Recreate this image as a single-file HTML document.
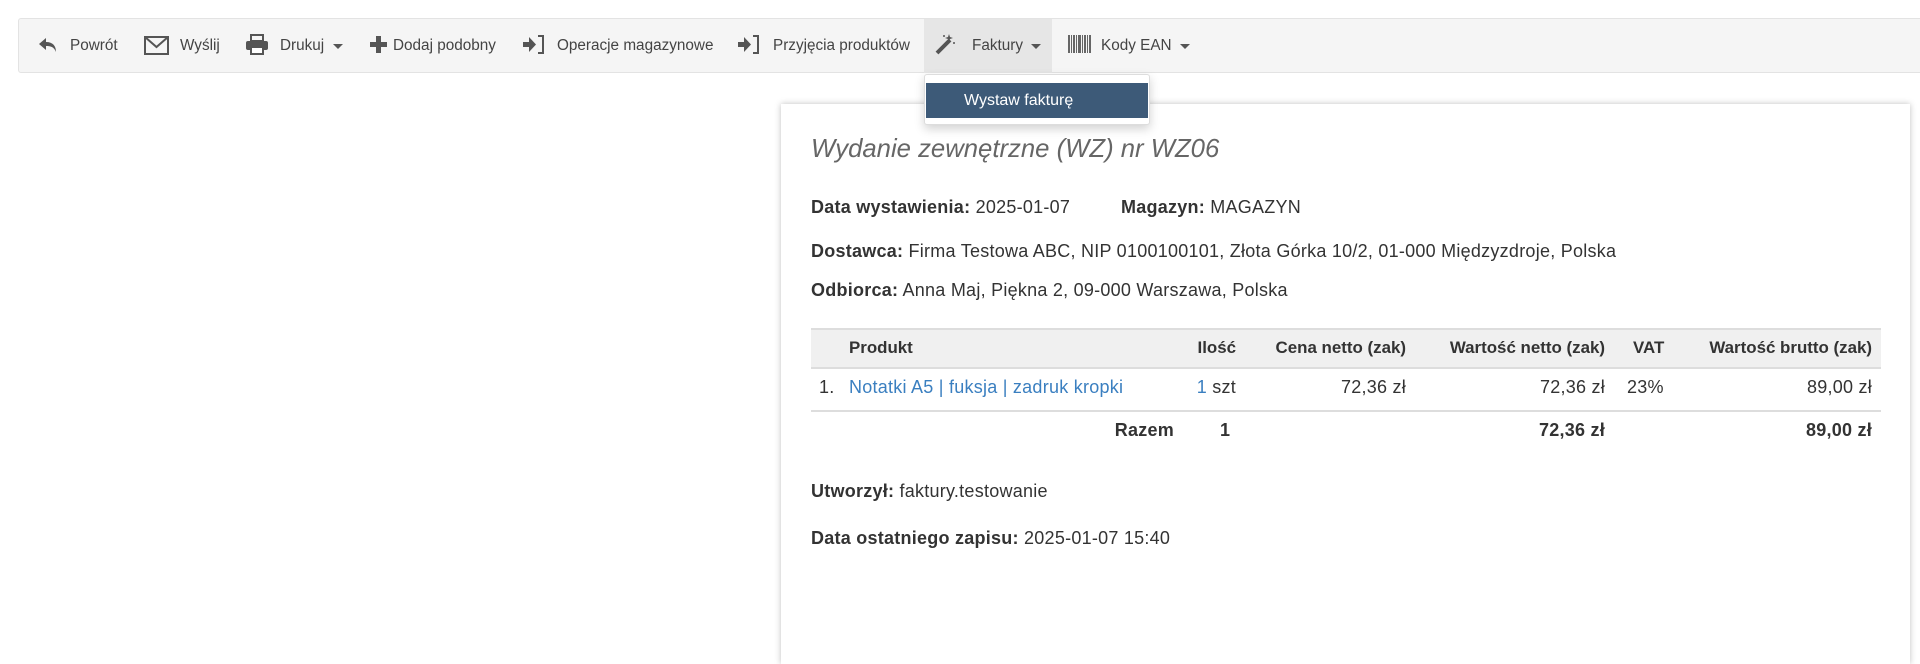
<!DOCTYPE html>
<html><head><meta charset="utf-8"><style>
*{margin:0;padding:0;box-sizing:border-box}
body{width:1920px;height:645px;background:#fff;font-family:"Liberation Sans",Arial,sans-serif;color:#333;position:relative;overflow:hidden}
.tb{position:absolute;left:18px;top:18px;width:1910px;height:55px;background:#f5f5f5;border:1px solid #e3e3e3;border-radius:3px}
.a{position:absolute;font-size:15.3px;color:#444;top:37px;white-space:nowrap}
.ic{position:absolute;top:34px}
.act{position:absolute;left:924px;top:19px;width:128px;height:54px;background:#e6e6e6}
.car{position:absolute;top:44px;width:0;height:0;border-left:5px solid transparent;border-right:5px solid transparent;border-top:5px solid #555}
.dd{position:absolute;left:924px;top:74px;width:226px;height:51px;background:#fff;border:1px solid #ddd;border-radius:3px;box-shadow:0 4px 10px rgba(0,0,0,.18);z-index:5}
.dd div{position:absolute;left:1px;top:8px;width:222px;height:35px;background:#3d5a78;color:#fff;font-size:16px;line-height:35px;padding-left:38px}
.pn{position:absolute;left:781px;top:104px;width:1129px;height:560px;background:#fff;box-shadow:0 0 6px rgba(0,0,0,.25)}
.t{position:absolute;white-space:nowrap;font-size:18px;letter-spacing:0.25px;color:#333}
.h{font-size:16.9px;letter-spacing:0}
b{font-weight:bold}
.ln{position:absolute;left:811px;width:1070px;height:2px;background:#ddd}
.r{text-align:right}
.lk{color:#3a7fc0}
</style></head><body>
<div class="tb"></div>
<div class="act"></div>
<svg class="ic" style="left:38px;top:36px" width="20" height="18" viewBox="0 0 20 18"><path d="M8 2 L1 8 L8 14 V10 C13 10 16 11 18 16 C18 10 15 6 8 6 Z" fill="#555"/></svg>
<div class="a" style="left:70px">Powrót</div>
<svg class="ic" style="left:144px;top:36px" width="25" height="19" viewBox="0 0 25 19"><rect x="1" y="1" width="23" height="17" fill="none" stroke="#555" stroke-width="2"/><path d="M1 1 L12.5 11 L24 1" fill="none" stroke="#555" stroke-width="2"/></svg>
<div class="a" style="left:180px">Wyślij</div>
<svg class="ic" style="left:246px" width="22" height="21" viewBox="0 0 22 21"><rect x="5" y="1" width="12" height="6" fill="none" stroke="#555" stroke-width="2"/><rect x="0" y="7" width="22" height="9" rx="2" fill="#555"/><rect x="5" y="13" width="12" height="7" fill="#fff" stroke="#555" stroke-width="2"/></svg>
<div class="a" style="left:280px">Drukuj</div><div class="car" style="left:333px"></div>
<svg class="ic" style="left:370px;top:36px" width="17" height="17" viewBox="0 0 17 17"><path d="M6 0h5v6h6v5h-6v6H6v-6H0V6h6z" fill="#555"/></svg>
<div class="a" style="left:393px">Dodaj podobny</div>
<svg class="ic" style="left:523px;top:35px" width="22" height="19" viewBox="0 0 22 19"><path d="M0 7h6V2l7 7.5-7 7.5v-5H0z" fill="#555"/><path d="M15 1h5v17h-5" fill="none" stroke="#555" stroke-width="2"/></svg>
<div class="a" style="left:557px">Operacje magazynowe</div>
<svg class="ic" style="left:738px;top:35px" width="22" height="19" viewBox="0 0 22 19"><path d="M0 7h6V2l7 7.5-7 7.5v-5H0z" fill="#555"/><path d="M15 1h5v17h-5" fill="none" stroke="#555" stroke-width="2"/></svg>
<div class="a" style="left:773px">Przyjęcia produktów</div>
<svg class="ic" style="left:935px;top:33px" width="22" height="22" viewBox="0 0 22 22"><path d="M2 20 L15 7" stroke="#555" stroke-width="4"/><path d="M13 4l1-3 1 3 3 1-3 1-1 3-1-3-3-1z" fill="#555"/><circle cx="19" cy="10" r="1" fill="#555"/><circle cx="9" cy="3" r="1" fill="#555"/></svg>
<div class="a" style="left:972px">Faktury</div><div class="car" style="left:1031px"></div>
<svg class="ic" style="left:1068px;top:35px" width="23" height="18" viewBox="0 0 23 18" fill="#666"><rect x="0" y="0" width="2" height="18"/><rect x="3" y="0" width="1" height="18"/><rect x="5" y="0" width="2" height="18"/><rect x="8" y="0" width="1" height="18"/><rect x="10" y="0" width="3" height="18"/><rect x="14" y="0" width="1" height="18"/><rect x="16" y="0" width="2" height="18"/><rect x="19" y="0" width="1" height="18"/><rect x="21" y="0" width="2" height="18"/></svg>
<div class="a" style="left:1101px">Kody EAN</div><div class="car" style="left:1180px"></div>
<div class="dd"><div>Wystaw fakturę</div></div>

<div class="pn"></div>
<div class="t" style="left:811px;top:135px;font-size:25.7px;letter-spacing:0;font-style:italic;color:#666">Wydanie zewnętrzne (WZ) nr WZ06</div>
<div class="t" style="left:811px;top:197px"><b>Data wystawienia:</b> 2025-01-07</div>
<div class="t" style="left:1121px;top:197px"><b>Magazyn:</b> MAGAZYN</div>
<div class="t" style="left:811px;top:241px"><b>Dostawca:</b> Firma Testowa ABC, NIP 0100100101, Złota Górka 10/2, 01-000 Międzyzdroje, Polska</div>
<div class="t" style="left:811px;top:280px"><b>Odbiorca:</b> Anna Maj, Piękna 2, 09-000 Warszawa, Polska</div>

<div style="position:absolute;left:811px;top:328px;width:1070px;height:41px;background:#f0f0f0;border-top:2px solid #ddd;border-bottom:2px solid #ddd"></div>
<div class="t h" style="left:849px;top:338px"><b>Produkt</b></div>
<div class="t h r" style="left:1136px;width:100px;top:338px"><b>Ilość</b></div>
<div class="t h r" style="left:1206px;width:200px;top:338px"><b>Cena netto (zak)</b></div>
<div class="t h r" style="left:1405px;width:200px;top:338px"><b>Wartość netto (zak)</b></div>
<div class="t h" style="left:1633px;top:338px"><b>VAT</b></div>
<div class="t h r" style="left:1672px;width:200px;top:338px"><b>Wartość brutto (zak)</b></div>

<div class="t" style="left:819px;top:377px">1.</div>
<div class="t lk" style="left:849px;top:377px">Notatki A5 | fuksja | zadruk kropki</div>
<div class="t r" style="left:1136px;width:100px;top:377px"><span class="lk">1</span> szt</div>
<div class="t r" style="left:1206px;width:200px;top:377px">72,36 zł</div>
<div class="t r" style="left:1405px;width:200px;top:377px">72,36 zł</div>
<div class="t" style="left:1627px;top:377px">23%</div>
<div class="t r" style="left:1672px;width:200px;top:377px">89,00 zł</div>
<div class="ln" style="top:410px"></div>
<div class="t r" style="left:1000px;width:174px;top:420px"><b>Razem</b></div>
<div class="t" style="left:1220px;top:420px"><b>1</b></div>
<div class="t r" style="left:1405px;width:200px;top:420px"><b>72,36 zł</b></div>
<div class="t r" style="left:1672px;width:200px;top:420px"><b>89,00 zł</b></div>

<div class="t" style="left:811px;top:481px"><b>Utworzył:</b> faktury.testowanie</div>
<div class="t" style="left:811px;top:528px"><b>Data ostatniego zapisu:</b> 2025-01-07 15:40</div>
</body></html>
